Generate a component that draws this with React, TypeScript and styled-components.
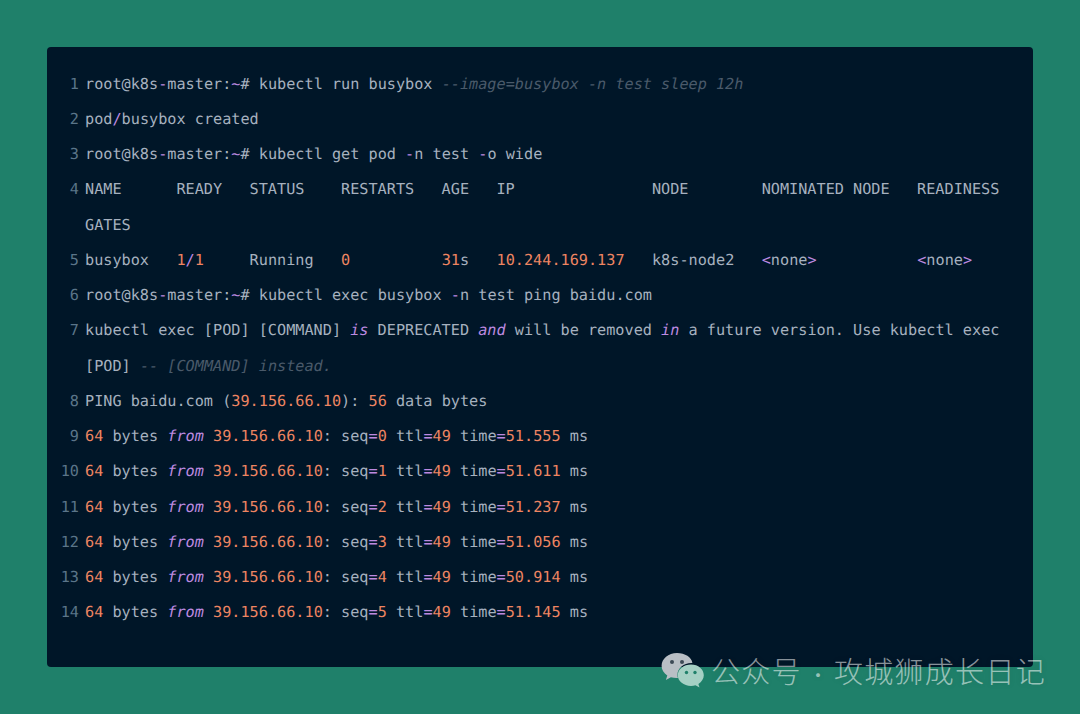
import React from "react";
import styled, { createGlobalStyle } from "styled-components";

const GlobalStyle = createGlobalStyle`
    html, body {
        margin: 0;
        padding: 0;
        height: 714px;
        overflow: hidden;
        background-color: #1f806a;
    }
`;

type Tone = "kw" | "tag" | "num" | "com" | "op";
type Token = string | [Tone, string];

const ping = (seq: number, time: string): Token[] => [
    ["num", "64"],
    " bytes ",
    ["kw", "from"],
    " ",
    ["num", "39.156.66.10"],
    ": seq",
    ["op", "="],
    ["num", String(seq)],
    " ttl",
    ["op", "="],
    ["num", "49"],
    " time",
    ["op", "="],
    ["num", time],
    " ms",
];

const prompt: Token[] = ["root@k8s", ["op", "-"], "master:", ["op", "~"], "# "];

const LINES: Token[][] = [
    [...prompt, "kubectl run busybox ", ["com", "--image=busybox -n test sleep 12h"]],
    ["pod", ["op", "/"], "busybox created"],
    [...prompt, "kubectl get pod ", ["op", "-"], "n test ", ["op", "-"], "o wide"],
    ["NAME      READY   STATUS    RESTARTS   AGE   IP               NODE        NOMINATED NODE   READINESS GATES"],
    [
        "busybox   ",
        ["num", "1"],
        ["op", "/"],
        ["num", "1"],
        "     Running   ",
        ["num", "0"],
        "          ",
        ["num", "31"],
        "s   ",
        ["num", "10.244.169.137"],
        "   k8s-node2   ",
        ["tag", "<"],
        "none",
        ["tag", ">"],
        "           ",
        ["tag", "<"],
        "none",
        ["tag", ">"],
    ],
    [...prompt, "kubectl exec busybox ", ["op", "-"], "n test ping baidu.com"],
    [
        "kubectl exec [POD] [COMMAND] ",
        ["kw", "is"],
        " DEPRECATED ",
        ["kw", "and"],
        " will be removed ",
        ["kw", "in"],
        " a future version. Use kubectl exec [POD] ",
        ["com", "-- [COMMAND] instead."],
    ],
    ["PING baidu.com (", ["num", "39.156.66.10"], "): ", ["num", "56"], " data bytes"],
    ping(0, "51.555"),
    ping(1, "51.611"),
    ping(2, "51.237"),
    ping(3, "51.056"),
    ping(4, "50.914"),
    ping(5, "51.145"),
];

export default function App() {
    return (
        <Page>
            <GlobalStyle />
            <CodePanel>
                {LINES.map((tokens, i) => (
                    <Row key={i}>
                        <LineNo>{i + 1}</LineNo>
                        <Code>
                            {tokens.map((t, j) =>
                                typeof t === "string" ? (
                                    t
                                ) : (
                                    <Tok key={j} $tone={t[0]}>
                                        {t[1]}
                                    </Tok>
                                )
                            )}
                        </Code>
                    </Row>
                ))}
            </CodePanel>
            <Watermark>
                <svg width="44" height="36" viewBox="0 0 44 36" aria-hidden="true">
                    <path
                        d="M16 1C7.400 1 .6 6.700 .6 13.800c0 4 2.200 7.400 5.700 9.800l-1.400 4.400 5-2.700c1.800.5 3.800.8 5.800.8h1.200a11 11 0 0 1-.5-3.200c0-6.700 6.200-12 14-12h1C30.600 5.300 24 1 16 1z"
                        fill="#b9bfc5"
                    />
                    <circle cx="11" cy="10" r="2" fill="#3d4a55" />
                    <circle cx="21" cy="10" r="2" fill="#3d4a55" />
                    <path
                        d="M30 12.500c-7.300 0-13.200 4.900-13.200 10.800S22.700 34 30 34c1.600 0 3.100-.3 4.500-.7l4 2.200-1.100-3.600c3.300-2 5.400-5.100 5.400-8.600 0-5.900-5.500-10.800-12.800-10.800z"
                        fill="#a5d0c4"
                    />
                    <circle cx="25.500" cy="20.500" r="1.700" fill="#1f806a" />
                    <circle cx="34" cy="20.500" r="1.700" fill="#1f806a" />
                </svg>
                <WatermarkText>
                    公众号<Dot>·</Dot>攻城狮成长日记
                </WatermarkText>
            </Watermark>
        </Page>
    );
}

const Page = styled.div`
    position: relative;
    width: 1080px;
    height: 714px;
    padding: 47px;
    box-sizing: border-box;
    background-color: #1f806a;
`;

const CodePanel = styled.div`
    box-sizing: border-box;
    width: 986px;
    height: 620px;
    padding: 19.5px 24px 0 13px;
    background-color: #001628;
    border-radius: 4px;
    font-family: "DejaVu Sans Mono", monospace;
    font-size: 15.2px;
    line-height: 35.27px;
    text-rendering: geometricPrecision;
    color: #a6b1bf;
`;

const Row = styled.div`
    display: flex;
    gap: 6px;
`;

const LineNo = styled.span`
    flex: 0 0 19px;
    text-align: right;
    color: #5b7589;
`;

const Code = styled.code`
    flex: 1;
    font: inherit;
    white-space: pre-wrap;
`;

const TONE_COLORS: Record<Tone, string> = {
    kw: "#bd8ae0",
    tag: "#bd8ae0",
    op: "#bd8ae0",
    num: "#ee8562",
    com: "#4a5a6a",
};

const Tok = styled.span<{ $tone: Tone }>`
    color: ${(p) => TONE_COLORS[p.$tone]};
    font-style: ${(p) => (p.$tone === "kw" || p.$tone === "com" ? "italic" : "normal")};
`;

const Watermark = styled.div`
    position: absolute;
    left: 661px;
    top: 652px;
    display: flex;
    align-items: center;
    gap: 6px;
`;

const WatermarkText = styled.span`
    font-family: "Noto Sans CJK SC", sans-serif;
    font-size: 29px;
    font-weight: 300;
    line-height: 36px;
    letter-spacing: 1.3px;
    color: rgba(255, 255, 255, 0.55);
    text-shadow: 0 0 6px rgba(0, 0, 0, 0.12);
    white-space: pre;
`;

const Dot = styled.span`
    display: inline-block;
    width: 32px;
    text-align: center;
    font-size: 20px;
    line-height: 1;
    letter-spacing: 0;
`;
